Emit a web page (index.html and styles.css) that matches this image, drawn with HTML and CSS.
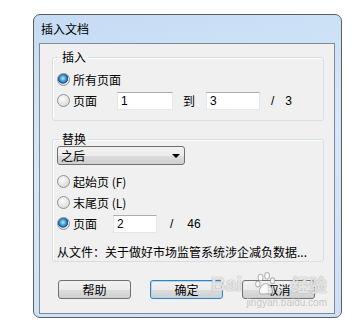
FILE: index.html
```html
<!DOCTYPE html>
<html lang="zh-CN">
<head>
    <meta charset="UTF-8">
    <title>插入文档</title>
    <link rel="stylesheet" href="styles.css">
</head>
<body>
    <div class="window">
        <div class="titlebar">插入文档</div>
        <div class="client">
            <fieldset class="group group-insert">
                <legend>插入</legend>
                <div class="row">
                    <label class="radio"><input type="radio" name="range" checked><span>所有页面</span></label>
                </div>
                <div class="row">
                    <label class="radio radio-wide"><input type="radio" name="range"><span>页面</span></label>
                    <input type="text" class="num num-from" value="1">
                    <span class="to">到</span>
                    <input type="text" class="num num-to" value="3">
                    <span class="slash">/</span>
                    <span class="count">3</span>
                </div>
            </fieldset>

            <fieldset class="group group-replace">
                <legend>替换</legend>
                <div class="combo">
                    <span>之后</span>
                    <span class="arrow"></span>
                </div>
                <div class="row row-first">
                    <label class="radio"><input type="radio" name="pos"><span>起始页 (F)</span></label>
                </div>
                <div class="row">
                    <label class="radio"><input type="radio" name="pos"><span>末尾页 (L)</span></label>
                </div>
                <div class="row">
                    <label class="radio radio-page"><input type="radio" name="pos" checked><span>页面</span></label>
                    <input type="text" class="num num-page" value="2">
                    <span class="slash slash-page">/</span>
                    <span class="count">46</span>
                </div>
                <p class="source">从文件：关于做好市场监管系统涉企减负数据...</p>
            </fieldset>

            <div class="buttons">
                <button>帮助</button>
                <button class="default">确定</button>
                <button>取消</button>
            </div>
        </div>

        <!-- watermark from the original screenshot -->
        <div class="watermark">
            <div class="wm-logo">
                <span class="wm-bai">Bai</span>
                <svg class="wm-paw" width="22" height="24" viewBox="0 0 20 22">
                    <g fill="rgba(255,255,255,0.8)" stroke="rgba(140,140,140,0.6)" stroke-width="1">
                        <ellipse cx="5" cy="5" rx="2.2" ry="3"/>
                        <ellipse cx="11" cy="3.5" rx="2.2" ry="3"/>
                        <ellipse cx="2.5" cy="11" rx="2" ry="2.6"/>
                        <ellipse cx="16" cy="8" rx="2" ry="2.6"/>
                        <path d="M4 19 C3 15 7 10.5 10 10.5 C13 10.5 17 15 16 19 C15 21 12 20 10 20 C8 20 5 21 4 19 Z"/>
                    </g>
                </svg>
                <span class="wm-jy">经验</span>
            </div>
            <span class="wm-url">jingyan.baidu.com</span>
        </div>
    </div>
</body>
</html>
```

FILE: styles.css
```css
body {
    margin: 0;
    background-color: #fff;
    font-family: "Noto Sans CJK SC", "Liberation Sans", sans-serif;
    font-size: 12px;
    color: #000;
}

.window {
    position: relative;
    width: 309px;
    height: 304px;
    margin: 14px 0 0 33px;
    padding: 0 6px 4px 5px;
    border: 1px solid #5a6068;
    border-radius: 7px;
    background: linear-gradient(170deg, #c6dcf4 0%, #d6e7f9 45%, #cde0f6 100%);
    box-sizing: border-box;
}

.titlebar {
    height: 28px;
    line-height: 28px;
    padding-left: 2px;
    font-size: 12px;
}

.client {
    height: 271px;
    border: 1px solid #7d8a98;
    background-color: #f0f0f0;
    box-sizing: border-box;
    padding: 0 10px 0 12px;
}

.group {
    margin: 6px 0 0 0;
    padding: 5px 4px 9px 4px;
    border: 1px solid #d5dfe5;
    border-radius: 3px;
    box-shadow: inset 1px 1px 0 #fff;
}

.group legend {
    margin-left: 3px;
    padding: 0 2px;
    line-height: 14px;
}

.group-replace {
    margin-top: 11px;
    padding-top: 0;
    padding-bottom: 1px;
}

.row {
    display: flex;
    align-items: center;
    height: 21px;
}

.row-first {
    margin-top: 6px;
}

.radio {
    display: flex;
    align-items: center;
}

.radio-wide {
    width: 60px;
}

.radio-page {
    width: 56px;
}

.radio input {
    appearance: none;
    width: 13px;
    height: 13px;
    margin: 0 3px 0 0;
    border: 1px solid #929292;
    border-radius: 50%;
    background: radial-gradient(circle at 40% 35%, #fcfcfc 0%, #e4e4e4 55%, #cfcfcf 100%);
    box-sizing: border-box;
}

.radio input:checked {
    background: radial-gradient(circle at 45% 40%, #bfe6fb 0%, #2d8fd0 38%, #19508a 55%, #e9e9e9 62%, #d2d2d2 100%);
}

.num {
    height: 18px;
    padding: 0 3px;
    border: 1px solid #e2e8ee;
    border-top-color: #abadb3;
    background: #fff;
    font-family: "Liberation Sans", sans-serif;
    font-size: 12px;
    box-sizing: border-box;
}

.num-from {
    width: 56px;
}

.num-to {
    width: 54px;
}

.num-page {
    width: 44px;
}

.to {
    margin: 0 11px 0 10px;
}

.slash {
    margin: 0 11px 0 11px;
    font-family: "Liberation Sans", sans-serif;
}

.slash-page {
    margin: 0 14px 0 13px;
}

.count {
    font-family: "Liberation Sans", sans-serif;
}

.combo {
    display: flex;
    align-items: center;
    justify-content: space-between;
    width: 128px;
    height: 19px;
    padding: 0 4px 0 3px;
    border: 1px solid #707070;
    border-radius: 3px;
    background: linear-gradient(#f2f2f2 0%, #ebebeb 50%, #dddddd 51%, #cfcfcf 100%);
    box-sizing: border-box;
}

.arrow {
    width: 0;
    height: 0;
    border-left: 4px solid transparent;
    border-right: 4px solid transparent;
    border-top: 4px solid #000;
}

.source {
    margin: 10px 0 0 0;
    line-height: 16px;
    white-space: nowrap;
}

.buttons {
    display: flex;
    gap: 19px;
    margin: 18px 0 0 6px;
}

.buttons button {
    width: 73px;
    height: 19px;
    padding: 0;
    border: 1px solid #707070;
    border-radius: 3px;
    background: linear-gradient(#f2f2f2 0%, #ebebeb 50%, #dddddd 51%, #cfcfcf 100%);
    font-family: "Noto Sans CJK SC", sans-serif;
    font-size: 12px;
    color: #000;
}

.buttons button.default {
    border-color: #3c7fb1;
    box-shadow: inset 0 0 0 1px #a8dcf6;
}

.watermark {
    position: absolute;
    left: 177px;
    top: 256px;
    display: flex;
    flex-direction: column;
    align-items: flex-end;
    pointer-events: none;
}

.wm-logo {
    display: flex;
    align-items: center;
    gap: 2px;
    color: rgba(255, 255, 255, 0.8);
    text-shadow: 0 0 1px rgba(110, 110, 110, 0.9);
}

.wm-bai {
    font-family: "Liberation Sans", sans-serif;
    font-size: 20px;
    font-weight: bold;
    width: 42px;
}

.wm-paw {
    margin-right: 12px;
}

.wm-jy {
    font-size: 18px;
    font-weight: bold;
}

.wm-url {
    margin-top: 0;
    font-family: "Liberation Sans", sans-serif;
    font-size: 10px;
    color: rgba(190, 190, 190, 0.85);
}
```
